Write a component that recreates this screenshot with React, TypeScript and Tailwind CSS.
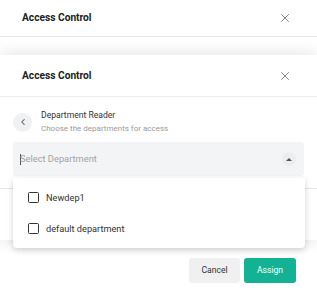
import React from 'react';
import { X, ChevronLeft } from 'lucide-react';

function Option({ label }: { label: string }) {
  return (
    <div className="flex items-center gap-[7px] h-[31px] px-[15px]">
      <span className="w-[11px] h-[11px] border-[1.5px] border-[#333] rounded-[1.5px]" />
      <span className="text-[9.2px] text-[#333]">{label}</span>
    </div>
  );
}

export default function App() {
  return (
    <div className="w-[317px] h-[295px] bg-white overflow-hidden relative" style={{ fontFamily: 'Roboto, "Liberation Sans", sans-serif' }}>
      {/* background dialog */}
      <div className="flex items-center justify-between px-[22px] h-[37px] border-b border-[#e8e8ec]">
        <h2 className="text-[10.2px] font-bold text-[#222]">Access Control</h2>
        <X className="w-[14px] h-[14px] text-[#777] mr-[3px]" strokeWidth={1.5} />
      </div>

      {/* foreground dialog */}
      <div className="mt-[18px] bg-white relative shadow-[0_0_16px_rgba(0,0,0,0.13)]">
        <div className="flex items-center justify-between px-[22px] h-[42px] border-b border-[#ececef]">
          <h2 className="text-[10.2px] font-bold text-[#222]">Access Control</h2>
          <X className="w-[14px] h-[14px] text-[#777] mr-[3px]" strokeWidth={1.5} />
        </div>

        <div className="px-[13px] pt-[11px]">
          <div className="flex items-center gap-[9px]">
            <div className="w-[19px] h-[19px] rounded-full bg-[#f0f1f3] flex items-center justify-center">
              <ChevronLeft className="w-[10px] h-[10px] text-[#555]" strokeWidth={2.5} />
            </div>
            <div className="leading-[14px]">
              <div className="text-[8.6px] text-[#333]">Department Reader</div>
              <div className="text-[8px] text-[#9a9a9a]">Choose the departments for access</div>
            </div>
          </div>

          <div className="mt-[6px] h-[34px] bg-[#f3f4f6] rounded-[3px] flex items-center justify-between pl-[7px] pr-[8px]">
            <div className="flex items-center">
              <span className="w-px h-[11px] bg-[#555]" />
              <span className="text-[9.3px] text-[#a3a3a3] -ml-px">Select Department</span>
            </div>
            <div className="w-[14px] h-[14px] rounded-full bg-[#ecedef] flex items-center justify-center">
              <span className="w-0 h-0 border-l-[3px] border-r-[3px] border-b-[3px] border-l-transparent border-r-transparent border-b-[#555]" />
            </div>
          </div>
        </div>

        <div className="mt-[12px] border-t border-[#e6e6ea] h-[52px]" />
      </div>

      {/* footer */}
      <div className="flex justify-end gap-[4px] pr-[21px] pt-[18px]">
        <button className="w-[51px] h-[25px] rounded-[3px] bg-[#f0f0f0] text-[8.6px] text-[#333]">Cancel</button>
        <button className="w-[52px] h-[25px] rounded-[3px] bg-[#13b294] text-[8.6px] text-white">Assign</button>
      </div>

      {/* dropdown menu */}
      <div className="absolute left-[13px] top-[178px] w-[292px] h-[70px] bg-white rounded-b-[4px] shadow-[0_2px_6px_rgba(0,0,0,0.18)] pt-[4px]">
        <Option label="Newdep1" />
        <Option label="default department" />
      </div>
    </div>
  );
}
